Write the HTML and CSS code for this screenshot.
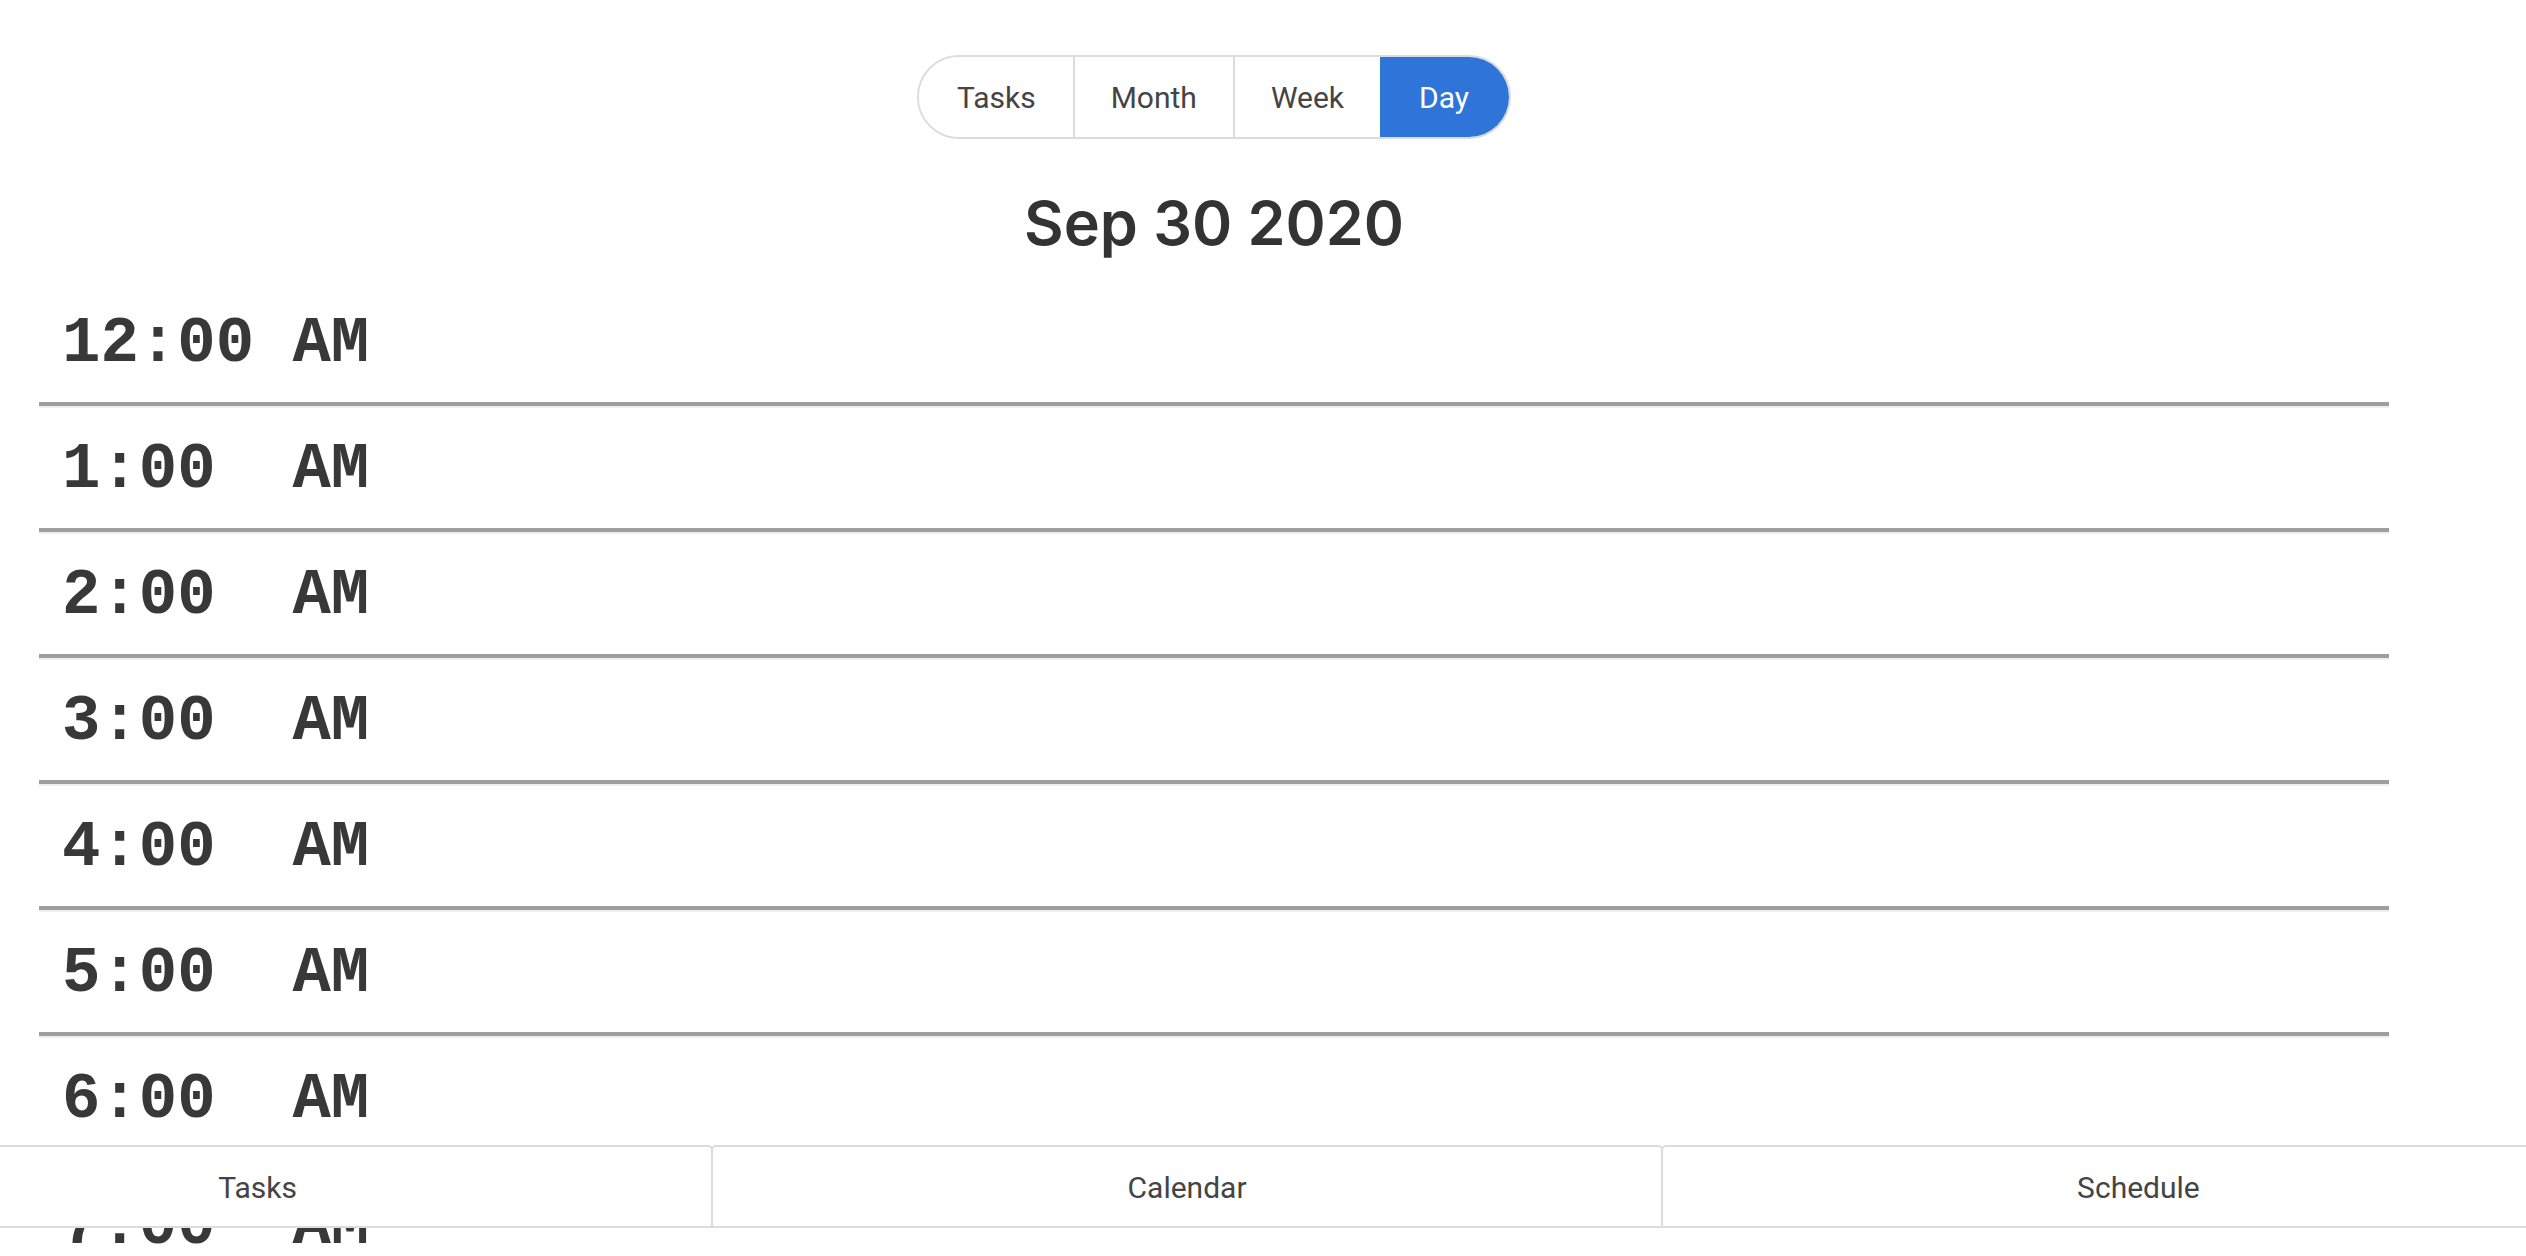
FILE: index.html
```html
<!DOCTYPE html>
<html>
<head>
<meta charset="utf-8">
<link rel="stylesheet" href="styles.css">
</head>
<body>
<div class="app">
  <div class="seg-wrap">
    <nav class="seg">
      <button class="seg-btn">Tasks</button>
      <button class="seg-btn">Month</button>
      <button class="seg-btn">Week</button>
      <button class="seg-btn active">Day</button>
    </nav>
  </div>
  <h1 class="date">Sep 30 2020</h1>
  <div class="hours">
    <div class="hour"><span class="t">12:00</span><span class="ap">AM</span></div>
    <div class="hour"><span class="t">1:00</span><span class="ap">AM</span></div>
    <div class="hour"><span class="t">2:00</span><span class="ap">AM</span></div>
    <div class="hour"><span class="t">3:00</span><span class="ap">AM</span></div>
    <div class="hour"><span class="t">4:00</span><span class="ap">AM</span></div>
    <div class="hour"><span class="t">5:00</span><span class="ap">AM</span></div>
    <div class="hour"><span class="t">6:00</span><span class="ap">AM</span></div>
    <div class="hour"><span class="t">7:00</span><span class="ap">AM</span></div>
    <div class="hour"><span class="t">8:00</span><span class="ap">AM</span></div>
    <div class="hour"><span class="t">9:00</span><span class="ap">AM</span></div>
    <div class="hour"><span class="t">10:00</span><span class="ap">AM</span></div>
    <div class="hour"><span class="t">11:00</span><span class="ap">AM</span></div>
    <div class="hour"><span class="t">12:00</span><span class="ap">PM</span></div>
    <div class="hour"><span class="t">1:00</span><span class="ap">PM</span></div>
    <div class="hour"><span class="t">2:00</span><span class="ap">PM</span></div>
    <div class="hour"><span class="t">3:00</span><span class="ap">PM</span></div>
    <div class="hour"><span class="t">4:00</span><span class="ap">PM</span></div>
    <div class="hour"><span class="t">5:00</span><span class="ap">PM</span></div>
    <div class="hour"><span class="t">6:00</span><span class="ap">PM</span></div>
    <div class="hour"><span class="t">7:00</span><span class="ap">PM</span></div>
    <div class="hour"><span class="t">8:00</span><span class="ap">PM</span></div>
    <div class="hour"><span class="t">9:00</span><span class="ap">PM</span></div>
    <div class="hour"><span class="t">10:00</span><span class="ap">PM</span></div>
    <div class="hour"><span class="t">11:00</span><span class="ap">PM</span></div>
  </div>
</div>
<nav class="tabbar">
  <a class="tab">Tasks</a>
  <a class="tab">Calendar</a>
  <a class="tab">Schedule</a>
</nav>
</body>
</html>
```
FILE: styles.css
```css
html, body {
  margin: 0;
  padding: 0;
  background: #ffffff;
}

.app {
  width: 2428px;
  padding-top: 55px;
}

.seg-wrap {
  display: flex;
  justify-content: center;
}

.seg {
  display: flex;
  height: 80px;
  border: 2px solid #dcdcdc;
  border-radius: 42px;
  overflow: hidden;
}

.seg-btn {
  font-family: Roboto, "Noto Sans", sans-serif;
  font-size: 30px;
  color: #444444;
  background: #ffffff;
  border: none;
  border-left: 2px solid #dcdcdc;
  padding: 0 36px;
  margin: 0;
}

.seg-btn:first-child {
  border-left: none;
  padding: 0 37px 0 38px;
}

.seg-btn.active {
  background: #2f75d9;
  color: #ffffff;
  border-left: none;
  padding: 0 40px 0 39px;
}

.date {
  font-family: Inter, "Noto Sans", sans-serif;
  font-weight: 600;
  font-size: 61px;
  color: #333333;
  text-align: center;
  margin: 47px 0 20px;
  line-height: normal;
}

.hours {
  padding: 0 39px;
}

.hour {
  border-bottom: 4px solid #9e9e9e;
  box-shadow: 0 2px 0 #eeeeee;
  display: flex;
  align-items: center;
  padding: 6px 0 0 23px;
  box-sizing: content-box;
  height: 116px;
  font-family: "Liberation Mono", "Courier New", monospace;
  font-weight: bold;
  font-size: 64px;
  color: #383838;
}

.hour .t {
  display: inline-block;
  width: 6ch;
}

.tabbar {
  position: fixed;
  left: -196px;
  bottom: 28px;
  width: 2812px;
  height: 81px;
  display: flex;
  background: #ffffff;
  border-bottom: 2px solid #dcdcdc;
}

.tab {
  flex: 1 1 auto;
  display: flex;
  align-items: center;
  justify-content: center;
  border: 2px solid #dcdcdc;
  border-bottom: none;
  border-radius: 5px 5px 0 0;
  margin-left: -2px;
  font-family: Roboto, "Noto Sans", sans-serif;
  font-size: 30px;
  color: #444444;
  padding-top: 2px;
}
```
